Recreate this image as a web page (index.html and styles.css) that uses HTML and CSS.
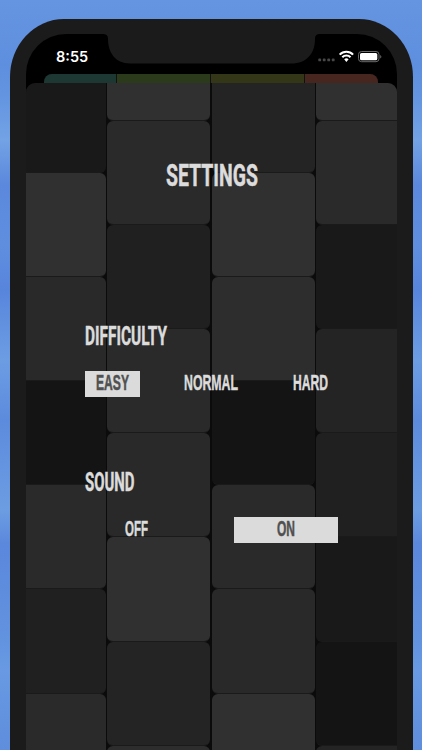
FILE: index.html
```html
<!DOCTYPE html>
<html lang="en">

<head>
  <meta charset="utf-8">
  <title>Settings</title>
  <link rel="stylesheet" href="styles.css">
</head>

<body>
  <div class="phone">
    <div class="screen">
      <svg class="notch" width="208" height="30" viewBox="0 0 208 30">
        <path d="M-5 0H213C210 0 208 1 208 5C208 19 200 29.500 184 29.500H23C8 29.500 1 18 1 5C1 1 -1 0 -5 0Z" />
      </svg>

      <header class="status">
        <span class="time">8:55</span>
        <svg class="indicators" width="66" height="14" viewBox="0 0 66 14">
          <g fill="#484848">
            <rect x="0.300" y="9.500" width="2.800" height="2.800" rx="0.900" />
            <rect x="4.800" y="9.500" width="2.800" height="2.800" rx="0.900" />
            <rect x="9.300" y="9.500" width="2.800" height="2.800" rx="0.900" />
            <rect x="13.800" y="9.500" width="2.800" height="2.800" rx="0.900" />
          </g>
          <g fill="none" stroke="#fff" stroke-width="2.100">
            <path d="M21.700 5.600a9.200 9.200 0 0 1 13.400 0" />
            <path d="M24.300 8.300a5.700 5.700 0 0 1 8.200 0" />
          </g>
          <path d="M26.200 10.200a3.200 3.200 0 0 1 4.400 0L28.400 12.900Z" fill="#fff" />
          <rect x="40.500" y="2.500" width="20.500" height="10.200" rx="3" fill="none" stroke="#6a6a6a" />
          <rect x="42" y="4" width="17.300" height="7.300" rx="1.600" fill="#fff" />
          <path d="M62.300 6v3.400a1.900 1.900 0 0 0 0-3.400Z" fill="#777" />
        </svg>
      </header>

      <div class="previous">
        <i class="teal"></i>
        <i class="green"></i>
        <i class="olive"></i>
        <i class="red"></i>
      </div>

      <main class="sheet">
        <div class="tiles">
          <div class="column low">
            <i class="t2"></i><i class="t8"></i><i class="t5"></i><i class="t1"></i><i class="t6"></i><i class="t3"></i><i class="t6"></i>
          </div>
          <div class="column high">
            <i class="t8"></i><i class="t6"></i><i class="t3"></i><i class="t6"></i><i class="t5"></i><i class="t8"></i><i class="t4"></i><i class="t7"></i>
          </div>
          <div class="column low">
            <i class="t4"></i><i class="t8"></i><i class="t7"></i><i class="t1"></i><i class="t6"></i><i class="t5"></i><i class="t8"></i>
          </div>
          <div class="column high">
            <i class="t8"></i><i class="t6"></i><i class="t2"></i><i class="t4"></i><i class="t3"></i><i class="t2"></i><i class="t1"></i><i class="t4"></i>
          </div>
        </div>

        <div class="settings">
          <h1>
            <svg class="label title" width="92" height="26"><text x="0" y="24" textLength="92" lengthAdjust="spacingAndGlyphs">SETTINGS</text></svg>
          </h1>

          <section class="difficulty">
            <h2>
              <svg class="label heading" width="82" height="20"><text x="0" y="19" textLength="82" lengthAdjust="spacingAndGlyphs">DIFFICULTY</text></svg>
            </h2>
            <div class="options">
              <button class="selected">
                <svg class="label" width="33" height="18"><text x="0" y="15" textLength="33" lengthAdjust="spacingAndGlyphs">EASY</text></svg>
              </button>
              <button>
                <svg class="label" width="54" height="18"><text x="0" y="15" textLength="54" lengthAdjust="spacingAndGlyphs">NORMAL</text></svg>
              </button>
              <button>
                <svg class="label" width="35" height="18"><text x="0" y="15" textLength="35" lengthAdjust="spacingAndGlyphs">HARD</text></svg>
              </button>
            </div>
          </section>

          <section class="sound">
            <h2>
              <svg class="label heading" width="49.500" height="20"><text x="0" y="19" textLength="49.500" lengthAdjust="spacingAndGlyphs">SOUND</text></svg>
            </h2>
            <div class="options">
              <button>
                <svg class="label" width="23" height="18"><text x="0" y="15" textLength="23" lengthAdjust="spacingAndGlyphs">OFF</text></svg>
              </button>
              <button class="selected">
                <svg class="label" width="18" height="18"><text x="0" y="15" textLength="18" lengthAdjust="spacingAndGlyphs">ON</text></svg>
              </button>
            </div>
          </section>
        </div>
      </main>
    </div>
  </div>
</body>

</html>
```

FILE: styles.css
```css
body {
  display: flow-root;
  margin: 0;
  height: 750px;
  overflow: hidden;
  font-family: Roboto, 'Liberation Sans', sans-serif;
  background: linear-gradient(180deg, #6595e0 0, #5e8fdf 65px, #6294e0 95px,
    #73a2e5 140px, #5b88dc 185px, #5f8edf 245px, #5885dc 290px,
    #6c9de3 360px, #5c8bdd 420px, #6c9de2 510px, #5b87dc 545px,
    #6293df 640px, #6899e2 670px, #5e8edc 750px);
}

.phone {
  box-sizing: border-box;
  width: 403px;
  height: 731px;
  margin: 19px 0 0 10px;
  padding: 15px 16px 0;
  background: #1b1b1b;
  border-radius: 54px 54px 0 0 / 58px 58px 0 0;
}

.screen {
  position: relative;
  display: flex;
  flex-direction: column;
  height: 716px;
  overflow: hidden;
  background: #000;
  border-radius: 40px 40px 0 0;
}

.notch {
  position: absolute;
  top: 0;
  left: 81px;
  overflow: visible;
  fill: #1b1b1b;
}

.status {
  display: flex;
  justify-content: space-between;
  height: 40px;
  box-sizing: border-box;
  padding: 15px 13px 0 30px;
}

.time {
  font-family: Inter, sans-serif;
  font-size: 14.5px;
  font-weight: 600;
  line-height: 16px;
  color: #fff;
}

/* the screen the sheet was opened from */
.previous {
  display: grid;
  grid-template-columns: 72px 93px 93px 73px;
  gap: 1px;
  height: 9px;
  width: 334px;
  margin: 0 18px;
  overflow: hidden;
  background: #111;
  border-radius: 8px 8px 0 0;
}

.teal {
  background: #1d3733;
}

.green {
  background: #2a3a1b;
}

.olive {
  background: #343618;
}

.red {
  background: #46261f;
}

.sheet {
  display: grid;
  flex: 1;
  min-height: 0;
  overflow: hidden;
  background: #0b0b0b;
  border-radius: 9px 9px 0 0;
}

.tiles,
.settings {
  grid-area: 1 / 1;
  min-height: 0;
}

.tiles {
  display: grid;
  grid-template-columns: 80px 103px 103.500px 81px;
  gap: 1.300px;
  height: 667px;
  overflow: hidden;
}

.column i {
  display: block;
  box-sizing: border-box;
  height: 104.200px;
  border-bottom: 1px solid #1a1a1a;
  border-radius: 6px;
}

.column:first-child i {
  border-radius: 0 6px 6px 0;
}

.column:last-child i {
  border-radius: 6px 0 0 6px;
}

.low {
  margin-top: -14.500px;
}

.high {
  margin-top: -66.500px;
}

.t1 {
  background: #141414;
}

.t2 {
  background: #191919;
}

.t3 {
  background: #202020;
}

.t4 {
  background: #242424;
}

.t5 {
  background: #292929;
}

.t6 {
  background: #2a2a2a;
}

.t7 {
  background: #2d2d2d;
}

.t8 {
  background: #303030;
}

.settings {
  padding: 79px 58px 0 59px;
}

h1,
h2 {
  display: flex;
  margin: 0;
}

h1 {
  justify-content: center;
  height: 26px;
  padding-right: 1px;
}

h2 {
  height: 20px;
}

.label {
  display: block;
  overflow: visible;
  fill: #dcdcdc;
  stroke: #dcdcdc;
  stroke-width: 0.5px;
  font-size: 21.500px;
  font-weight: 700;
}

.title {
  font-size: 32px;
}

.heading {
  font-size: 25px;
}

.difficulty {
  margin-top: 138px;
}

.sound {
  margin-top: 75px;
}

.options {
  display: flex;
  justify-content: space-between;
  margin-top: 25px;
}

button {
  display: flex;
  align-items: center;
  justify-content: center;
  height: 26px;
  padding: 0 11px;
  background: none;
  border: 0;
}

.sound .options {
  padding-right: 1px;
}

.sound button {
  width: 104px;
}

.sound button:first-child {
  width: 102px;
}

.selected {
  background: #dbdbdb;
}

.selected .label {
  fill: #505050;
  stroke: #505050;
}
```
